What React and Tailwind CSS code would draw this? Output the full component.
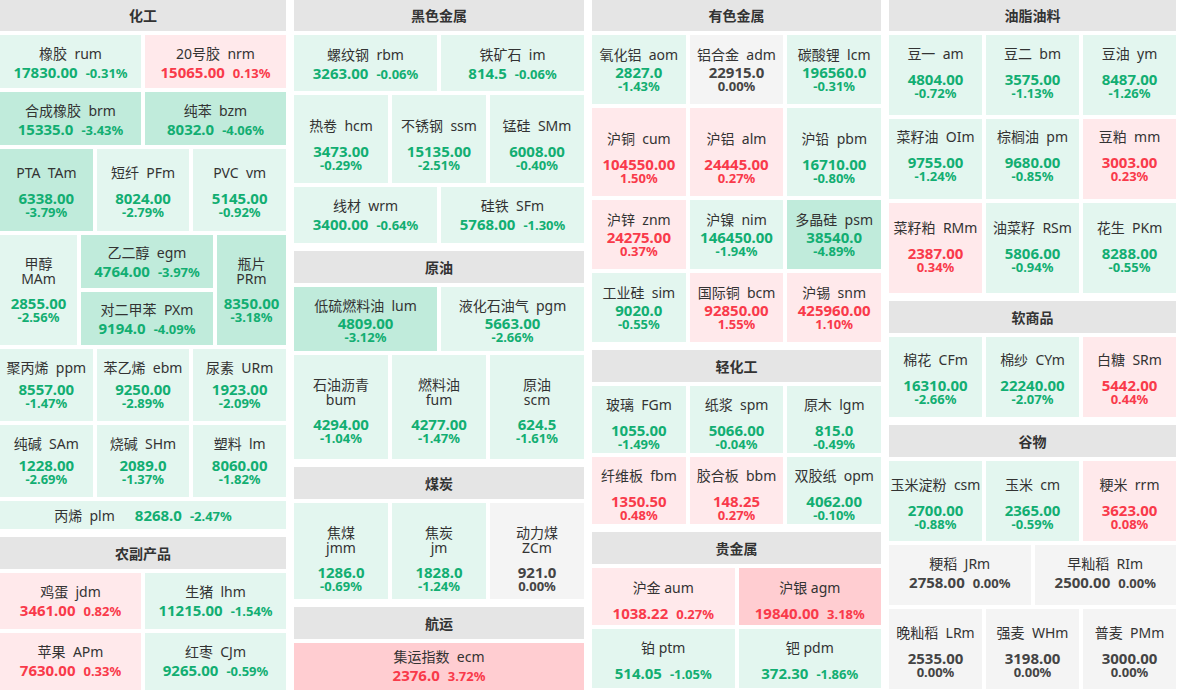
import React from 'react';

// colour of a tile follows the change: deep green <= -3%, deep red >= 3%
const tone = p => {
  const x = parseFloat(p);
  if (x <= -3) return 'G';
  if (x < 0) return 'g';
  if (x === 0) return 'n';
  if (x >= 3) return 'R';
  return 'r';
};

const BG = {
  G: 'bg-[#c0ebdb]',
  g: 'bg-[#e3f6ef]',
  n: 'bg-[#f4f4f4]',
  r: 'bg-[#ffe9eb]',
  R: 'bg-[#ffcdd1]',
};

const FG = {
  G: 'text-[#12ae72]',
  g: 'text-[#12ae72]',
  n: 'text-[#444]',
  r: 'text-[#f93a4a]',
  R: 'text-[#f93a4a]',
};

function Cell({ d, type = 'A', className = 'flex-1', pad = '', gap = 'mt-[10px]' }) {
  const [name, code, val, pct] = d;
  const t = tone(pct);
  const color = FG[t];

  let body;
  if (type === 'A') {
    body = (
      <>
        <div className="leading-[18px] whitespace-pre">{name}  {code}</div>
        <div className={`flex items-baseline justify-center leading-[18px] font-bold ${color}`}>
          <span className="text-[15px]">{val}</span>
          <span className="text-[13px] ml-2">{pct}</span>
        </div>
      </>
    );
  } else if (type === 'F') {
    body = (
      <>
        <div className="leading-[18px] whitespace-pre">{name} {code}</div>
        <div className={`flex items-baseline justify-center leading-[18px] font-bold mt-[7px] ${color}`}>
          <span className="text-[15px]">{val}</span>
          <span className="text-[13px] ml-2">{pct}</span>
        </div>
      </>
    );
  } else if (type === 'D') {
    body = (
      <div className="flex items-baseline justify-center gap-5">
        <span className="whitespace-pre leading-[18px]">{name}  {code}</span>
        <span className={`flex items-baseline font-bold ${color}`}>
          <span className="text-[15px]">{val}</span>
          <span className="text-[13px] ml-2">{pct}</span>
        </span>
      </div>
    );
  } else if (type === 'E') {
    body = (
      <>
        <div className="leading-[18px] whitespace-pre">{name}  {code}</div>
        <div className={`font-bold ${color}`}>
          <div className="text-[15px] leading-[16px]">{val}</div>
          <div className="text-[13px] leading-[13px]">{pct}</div>
        </div>
      </>
    );
  } else {
    // B: one-line name, C: name and code on two lines
    body = (
      <>
        {type === 'C' ? (
          <div className="leading-[15px]">
            <div>{name}</div>
            <div>{code}</div>
          </div>
        ) : (
          <div className="leading-[16px] whitespace-pre">{name}  {code}</div>
        )}
        <div className={`font-bold ${gap} ${color}`}>
          <div className="text-[15px] leading-[15px]">{val}</div>
          <div className="text-[13px] leading-[13px]">{pct}</div>
        </div>
      </>
    );
  }

  return (
    <div className={`${className} ${pad} ${BG[t]} flex flex-col items-center justify-center text-center text-[14px] text-[#333] overflow-hidden`}>
      {body}
    </div>
  );
}

function Header({ title, h = 'h-[32px]' }) {
  return (
    <div className={`${h} shrink-0 bg-[#e5e5e5] flex items-center justify-center font-bold text-[14px] text-[#333]`}>
      {title}
    </div>
  );
}

function Row({ h, children }) {
  return <div className={`flex gap-1 shrink-0 ${h}`}>{children}</div>;
}

export default function App() {
  return (
    <div
      className="w-[1178px] h-[690px] overflow-hidden bg-white flex gap-2"
      style={{ fontFamily: '"Noto Sans", "Noto Sans CJK SC", sans-serif' }}
    >
      {/* 化工 + 农副产品 */}
      <div className="w-[286px] shrink-0 flex flex-col gap-2">
        <div className="flex flex-col gap-1">
          <Header title="化工" h="h-[31px]" />
          <Row h="h-[53px]">
            <Cell pad="pt-[3px]" d={['橡胶', 'rum', '17830.00', '-0.31%']} />
            <Cell pad="pt-[3px]" d={['20号胶', 'nrm', '15065.00', '0.13%']} />
          </Row>
          <Row h="h-[53px]">
            <Cell pad="pt-[3px]" d={['合成橡胶', 'brm', '15335.0', '-3.43%']} />
            <Cell pad="pt-[3px]" d={['纯苯', 'bzm', '8032.0', '-4.06%']} />
          </Row>
          <Row h="h-[82px]">
            <Cell type="B" pad="pt-[4px]" d={['PTA', 'TAm', '6338.00', '-3.79%']} />
            <Cell type="B" pad="pt-[4px]" d={['短纤', 'PFm', '8024.00', '-2.79%']} />
            <Cell type="B" pad="pt-[4px]" d={['PVC', 'vm', '5145.00', '-0.92%']} />
          </Row>
          <Row h="h-[110px]">
            <Cell type="C" className="w-[77px]" d={['甲醇', 'MAm', '2855.00', '-2.56%']} />
            <div className="w-[132px] flex flex-col gap-1">
              <Cell className="h-[53px]" pad="pt-[2px]" d={['乙二醇', 'egm', '4764.00', '-3.97%']} />
              <Cell className="h-[53px]" pad="pt-[2px]" d={['对二甲苯', 'PXm', '9194.0', '-4.09%']} />
            </div>
            <Cell type="C" d={['瓶片', 'PRm', '8350.00', '-3.18%']} />
          </Row>
          <Row h="h-[72px]">
            <Cell type="B" gap="mt-[6px]" d={['聚丙烯', 'ppm', '8557.00', '-1.47%']} />
            <Cell type="B" gap="mt-[6px]" d={['苯乙烯', 'ebm', '9250.00', '-2.89%']} />
            <Cell type="B" gap="mt-[6px]" d={['尿素', 'URm', '1923.00', '-2.09%']} />
          </Row>
          <Row h="h-[72px]">
            <Cell type="B" gap="mt-[6px]" d={['纯碱', 'SAm', '1228.00', '-2.69%']} />
            <Cell type="B" gap="mt-[6px]" d={['烧碱', 'SHm', '2089.0', '-1.37%']} />
            <Cell type="B" gap="mt-[6px]" d={['塑料', 'lm', '8060.00', '-1.82%']} />
          </Row>
          <Row h="h-[28px]">
            <Cell type="D" d={['丙烯', 'plm', '8268.0', '-2.47%']} />
          </Row>
        </div>
        <div className="flex flex-col gap-1">
          <Header title="农副产品" />
          <Row h="h-[56px]">
            <Cell d={['鸡蛋', 'jdm', '3461.00', '0.82%']} />
            <Cell d={['生猪', 'lhm', '11215.00', '-1.54%']} />
          </Row>
          <Row h="h-[57px]">
            <Cell d={['苹果', 'APm', '7630.00', '0.33%']} />
            <Cell d={['红枣', 'CJm', '9265.00', '-0.59%']} />
          </Row>
        </div>
      </div>

      {/* 黑色金属 / 原油 / 煤炭 / 航运 */}
      <div className="w-[290px] shrink-0 flex flex-col gap-2">
        <div className="flex flex-col gap-1">
          <Header title="黑色金属" h="h-[31px]" />
          <Row h="h-[56px]">
            <Cell pad="pt-[2px]" d={['螺纹钢', 'rbm', '3263.00', '-0.06%']} />
            <Cell pad="pt-[2px]" d={['铁矿石', 'im', '814.5', '-0.06%']} />
          </Row>
          <Row h="h-[88px]">
            <Cell type="B" pad="pt-[11px]" d={['热卷', 'hcm', '3473.00', '-0.29%']} />
            <Cell type="B" pad="pt-[11px]" d={['不锈钢', 'ssm', '15135.00', '-2.51%']} />
            <Cell type="B" pad="pt-[11px]" d={['锰硅', 'SMm', '6008.00', '-0.40%']} />
          </Row>
          <Row h="h-[56px]">
            <Cell d={['线材', 'wrm', '3400.00', '-0.64%']} />
            <Cell d={['硅铁', 'SFm', '5768.00', '-1.30%']} />
          </Row>
        </div>
        <div className="flex flex-col gap-1">
          <Header title="原油" />
          <Row h="h-[64px]">
            <Cell type="E" pad="pt-[3px]" d={['低硫燃料油', 'lum', '4809.00', '-3.12%']} />
            <Cell type="E" pad="pt-[3px]" d={['液化石油气', 'pgm', '5663.00', '-2.66%']} />
          </Row>
          <Row h="h-[104px]">
            <Cell type="C" pad="pt-[8px]" d={['石油沥青', 'bum', '4294.00', '-1.04%']} />
            <Cell type="C" pad="pt-[8px]" d={['燃料油', 'fum', '4277.00', '-1.47%']} />
            <Cell type="C" pad="pt-[8px]" d={['原油', 'scm', '624.5', '-1.61%']} />
          </Row>
        </div>
        <div className="flex flex-col gap-1">
          <Header title="煤炭" />
          <Row h="h-[96px]">
            <Cell type="C" pad="pt-[16px]" d={['焦煤', 'jmm', '1286.0', '-0.69%']} />
            <Cell type="C" pad="pt-[16px]" d={['焦炭', 'jm', '1828.0', '-1.24%']} />
            <Cell type="C" pad="pt-[16px]" d={['动力煤', 'ZCm', '921.0', '0.00%']} />
          </Row>
        </div>
        <div className="flex flex-col gap-1">
          <Header title="航运" />
          <Row h="h-[47px]">
            <Cell d={['集运指数', 'ecm', '2376.0', '3.72%']} />
          </Row>
        </div>
      </div>

      {/* 有色金属 / 轻化工 / 贵金属 */}
      <div className="w-[289px] shrink-0 flex flex-col gap-2">
        <div className="flex flex-col gap-1">
          <Header title="有色金属" h="h-[31px]" />
          <Row h="h-[69px]">
            <Cell type="E" d={['氧化铝', 'aom', '2827.0', '-1.43%']} />
            <Cell type="E" d={['铝合金', 'adm', '22915.0', '0.00%']} />
            <Cell type="E" d={['碳酸锂', 'lcm', '196560.0', '-0.31%']} />
          </Row>
          <Row h="h-[88px]">
            <Cell type="B" pad="pt-[12px]" d={['沪铜', 'cum', '104550.00', '1.50%']} />
            <Cell type="B" pad="pt-[12px]" d={['沪铝', 'alm', '24445.00', '0.27%']} />
            <Cell type="B" pad="pt-[12px]" d={['沪铅', 'pbm', '16710.00', '-0.80%']} />
          </Row>
          <Row h="h-[69px]">
            <Cell type="E" d={['沪锌', 'znm', '24275.00', '0.37%']} />
            <Cell type="E" d={['沪镍', 'nim', '146450.00', '-1.94%']} />
            <Cell type="E" d={['多晶硅', 'psm', '38540.0', '-4.89%']} />
          </Row>
          <Row h="h-[69px]">
            <Cell type="E" d={['工业硅', 'sim', '9020.0', '-0.55%']} />
            <Cell type="E" d={['国际铜', 'bcm', '92850.00', '1.55%']} />
            <Cell type="E" d={['沪锡', 'snm', '425960.00', '1.10%']} />
          </Row>
        </div>
        <div className="flex flex-col gap-1">
          <Header title="轻化工" />
          <Row h="h-[67px]">
            <Cell type="B" pad="pt-[9px]" d={['玻璃', 'FGm', '1055.00', '-1.49%']} />
            <Cell type="B" pad="pt-[9px]" d={['纸浆', 'spm', '5066.00', '-0.04%']} />
            <Cell type="B" pad="pt-[9px]" d={['原木', 'lgm', '815.0', '-0.49%']} />
          </Row>
          <Row h="h-[67px]">
            <Cell type="B" pad="pt-[9px]" d={['纤维板', 'fbm', '1350.50', '0.48%']} />
            <Cell type="B" pad="pt-[9px]" d={['胶合板', 'bbm', '148.25', '0.27%']} />
            <Cell type="B" pad="pt-[9px]" d={['双胶纸', 'opm', '4062.00', '-0.10%']} />
          </Row>
        </div>
        <div className="flex flex-col gap-1">
          <Header title="贵金属" />
          <Row h="h-[57px]">
            <Cell type="F" pad="pt-[8px]" d={['沪金', 'aum', '1038.22', '0.27%']} />
            <Cell type="F" pad="pt-[8px]" d={['沪银', 'agm', '19840.00', '3.18%']} />
          </Row>
          <Row h="h-[59px]">
            <Cell type="F" pad="pt-[5px]" d={['铂', 'ptm', '514.05', '-1.05%']} />
            <Cell type="F" pad="pt-[5px]" d={['钯', 'pdm', '372.30', '-1.86%']} />
          </Row>
        </div>
      </div>

      {/* 油脂油料 / 软商品 / 谷物 */}
      <div className="w-[287px] shrink-0 flex flex-col gap-2">
        <div className="flex flex-col gap-1">
          <Header title="油脂油料" h="h-[31px]" />
          <Row h="h-[80px]">
            <Cell type="B" pad="pb-[5px]" d={['豆一', 'am', '4804.00', '-0.72%']} />
            <Cell type="B" pad="pb-[5px]" d={['豆二', 'bm', '3575.00', '-1.13%']} />
            <Cell type="B" pad="pb-[5px]" d={['豆油', 'ym', '8487.00', '-1.26%']} />
          </Row>
          <Row h="h-[80px]">
            <Cell type="B" pad="pb-[6px]" d={['菜籽油', 'OIm', '9755.00', '-1.24%']} />
            <Cell type="B" pad="pb-[6px]" d={['棕榈油', 'pm', '9680.00', '-0.85%']} />
            <Cell type="B" pad="pb-[6px]" d={['豆粕', 'mm', '3003.00', '0.23%']} />
          </Row>
          <Row h="h-[90px]">
            <Cell type="B" pad="pb-[3px]" d={['菜籽粕', 'RMm', '2387.00', '0.34%']} />
            <Cell type="B" pad="pb-[3px]" d={['油菜籽', 'RSm', '5806.00', '-0.94%']} />
            <Cell type="B" pad="pb-[3px]" d={['花生', 'PKm', '8288.00', '-0.55%']} />
          </Row>
        </div>
        <div className="flex flex-col gap-1">
          <Header title="软商品" />
          <Row h="h-[80px]">
            <Cell type="B" pad="pt-[4px]" d={['棉花', 'CFm', '16310.00', '-2.66%']} />
            <Cell type="B" pad="pt-[4px]" d={['棉纱', 'CYm', '22240.00', '-2.07%']} />
            <Cell type="B" pad="pt-[4px]" d={['白糖', 'SRm', '5442.00', '0.44%']} />
          </Row>
        </div>
        <div className="flex flex-col gap-1">
          <Header title="谷物" />
          <Row h="h-[80px]">
            <Cell type="B" pad="pt-[6px]" d={['玉米淀粉', 'csm', '2700.00', '-0.88%']} />
            <Cell type="B" pad="pt-[6px]" d={['玉米', 'cm', '2365.00', '-0.59%']} />
            <Cell type="B" pad="pt-[6px]" d={['粳米', 'rrm', '3623.00', '0.08%']} />
          </Row>
          <Row h="h-[60px]">
            <Cell pad="pb-[3px]" d={['粳稻', 'JRm', '2758.00', '0.00%']} />
            <Cell pad="pb-[3px]" d={['早籼稻', 'RIm', '2500.00', '0.00%']} />
          </Row>
          <Row h="h-[80px]">
            <Cell type="B" pad="pt-[6px]" d={['晚籼稻', 'LRm', '2535.00', '0.00%']} />
            <Cell type="B" pad="pt-[6px]" d={['强麦', 'WHm', '3198.00', '0.00%']} />
            <Cell type="B" pad="pt-[6px]" d={['普麦', 'PMm', '3000.00', '0.00%']} />
          </Row>
        </div>
      </div>
    </div>
  );
}
